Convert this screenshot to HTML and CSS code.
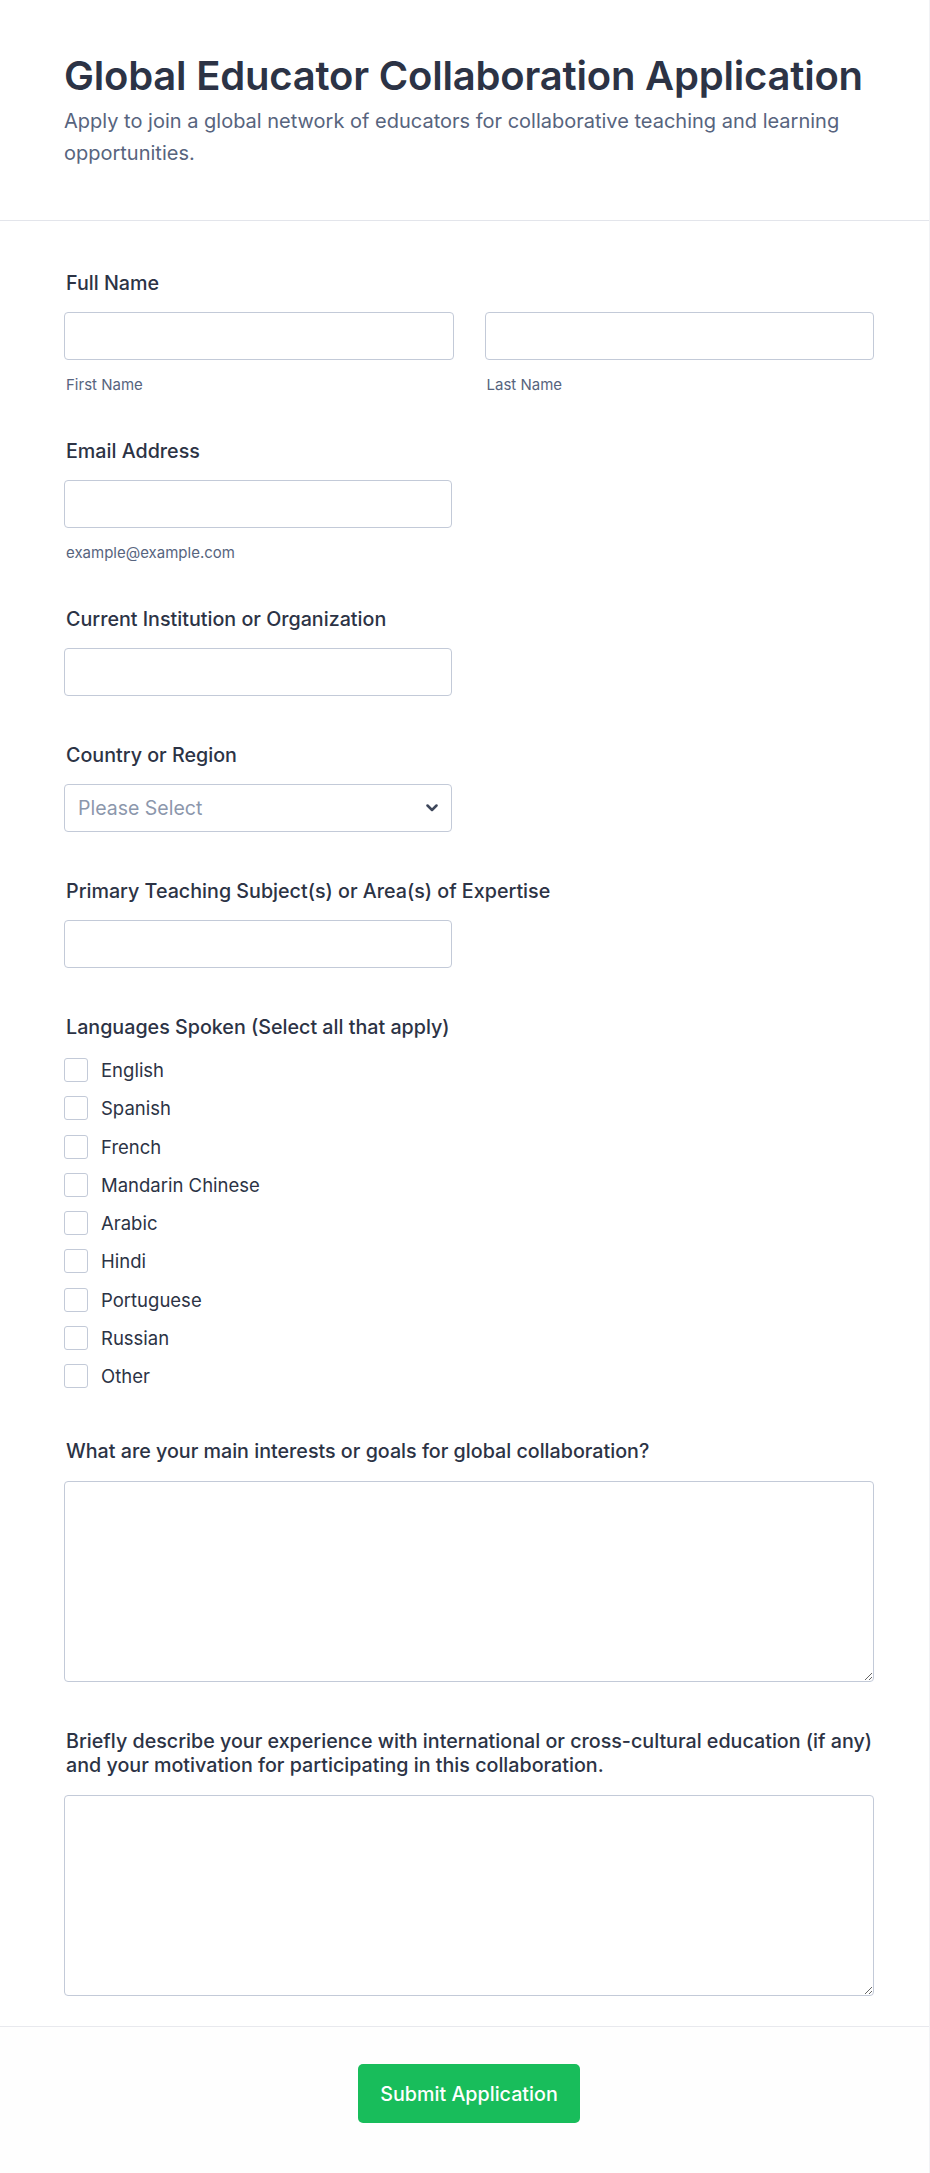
FILE: index.html
```html
<!DOCTYPE html>
<html lang="en">
<head>
<meta charset="utf-8">
<title>Global Educator Collaboration Application</title>
<link rel="stylesheet" href="styles.css">
</head>
<body>
<div class="page">
  <header class="header">
    <h1 class="title">Global Educator Collaboration Application</h1>
    <p class="subtitle">Apply to join a global network of educators for collaborative teaching and learning opportunities.</p>
  </header>

  <form class="form">
    <div class="field field-sub">
      <div class="label">Full Name</div>
      <div class="name-row">
        <div class="name-col">
          <input class="input" type="text">
          <div class="sublabel">First Name</div>
        </div>
        <div class="name-col">
          <input class="input" type="text">
          <div class="sublabel">Last Name</div>
        </div>
      </div>
    </div>

    <div class="field field-sub">
      <div class="label">Email Address</div>
      <input class="input input-half" type="email">
      <div class="sublabel">example@example.com</div>
    </div>

    <div class="field">
      <div class="label">Current Institution or Organization</div>
      <input class="input input-half" type="text">
    </div>

    <div class="field">
      <div class="label">Country or Region</div>
      <div class="select-wrap">
        <select class="select">
          <option>Please Select</option>
        </select>
        <svg class="chevron" width="12" height="8" viewBox="0 0 12 8"><path d="M1.5 1.5 L6 6 L10.5 1.5" fill="none" stroke="#3e475b" stroke-width="2.5" stroke-linecap="round" stroke-linejoin="round"/></svg>
      </div>
    </div>

    <div class="field">
      <div class="label">Primary Teaching Subject(s) or Area(s) of Expertise</div>
      <input class="input input-half" type="text">
    </div>

    <div class="field field-check">
      <div class="label label-check">Languages Spoken (Select all that apply)</div>
      <div class="checks">
        <label class="check"><span class="box"></span><span>English</span></label>
        <label class="check"><span class="box"></span><span>Spanish</span></label>
        <label class="check"><span class="box"></span><span>French</span></label>
        <label class="check"><span class="box"></span><span>Mandarin Chinese</span></label>
        <label class="check"><span class="box"></span><span>Arabic</span></label>
        <label class="check"><span class="box"></span><span>Hindi</span></label>
        <label class="check"><span class="box"></span><span>Portuguese</span></label>
        <label class="check"><span class="box"></span><span>Russian</span></label>
        <label class="check"><span class="box"></span><span>Other</span></label>
      </div>
    </div>

    <div class="field">
      <div class="label label-ta">What are your main interests or goals for global collaboration?</div>
      <textarea class="textarea"></textarea>
    </div>

    <div class="field field-last">
      <div class="label label-ta">Briefly describe your experience with international or cross-cultural education (if any) and your motivation for participating in this collaboration.</div>
      <textarea class="textarea"></textarea>
    </div>
  </form>

  <footer class="footer">
    <button class="submit" type="button">Submit Application</button>
  </footer>
</div>
</body>
</html>
```

FILE: styles.css
```css
* { box-sizing: border-box; }

html, body {
  margin: 0;
  padding: 0;
  background: #ffffff;
}

body {
  font-family: Inter, "Noto Sans", "Liberation Sans", sans-serif;
  color: #2c3345;
}

.page {
  width: 930px;
  min-height: 2173px;
  border-right: 1px solid #f1f2f5;
  display: flex;
  flex-direction: column;
}

.header {
  padding: 52px 55px 51px 64px;
  border-bottom: 1px solid #e3e5eb;
}

.title {
  margin: 0;
  font-size: 40px;
  line-height: 48px;
  font-weight: 600;
  color: #2c3345;
  letter-spacing: -0.2px;
}

.subtitle {
  margin: 5px 0 0;
  font-size: 20px;
  line-height: 32px;
  font-weight: 400;
  color: #57647e;
}

.form {
  padding: 50px 55px 30px 64px;
  border-bottom: 1px solid #e8e9ee;
}

.field {
  margin-bottom: 47px;
}

.field-sub {
  margin-bottom: 44px;
}

.field-check {
  margin-bottom: 51px;
}

.field-last {
  margin-bottom: 0;
}

.label {
  font-size: 19.7px;
  line-height: 24px;
  font-weight: 500;
  color: #2c3345;
  padding-left: 2px;
  margin-bottom: 17px;
}

.label-check {
  margin-bottom: 19px;
}

.label-ta {
  margin-bottom: 18px;
  margin-right: -10px;
}

.name-row {
  display: flex;
  gap: 31px;
}

.name-col {
  flex: 1 1 0;
  min-width: 0;
}

.input {
  display: block;
  width: 100%;
  height: 48px;
  border: 1px solid #c3cad8;
  border-radius: 4px;
  background: #fff;
  font-family: inherit;
  font-size: 18px;
  padding: 0 14px;
  outline: none;
}

.input-half {
  width: 388px;
}

.sublabel {
  margin-top: 15px;
  padding-left: 2px;
  font-size: 15px;
  line-height: 20px;
  color: #57647e;
}

.select-wrap {
  position: relative;
  width: 388px;
}

.select {
  display: block;
  width: 100%;
  height: 48px;
  border: 1px solid #c3cad8;
  border-radius: 4px;
  background: #fff;
  -webkit-appearance: none;
  appearance: none;
  font-family: inherit;
  font-size: 19.5px;
  color: #8c97ac;
  padding: 0 40px 0 13px;
  outline: none;
}

.chevron {
  position: absolute;
  right: 14px;
  top: 20px;
  pointer-events: none;
}

.checks {
  display: flex;
  flex-direction: column;
  gap: 14.3px;
}

.check {
  display: flex;
  align-items: center;
  height: 24px;
  font-size: 18.5px;
  line-height: 24px;
  color: #2c3345;
}

.box {
  width: 24px;
  height: 24px;
  border: 1px solid #c3cad8;
  border-radius: 3px;
  background: #fff;
  margin-right: 13px;
  flex: none;
}

.textarea {
  display: block;
  width: 100%;
  height: 201px;
  border: 1px solid #c3cad8;
  border-radius: 4px;
  background: #fff;
  font-family: inherit;
  font-size: 18px;
  padding: 10px 14px;
  resize: vertical;
  outline: none;
}

.footer {
  flex: 1;
  background: #fefefe;
  padding: 37px 55px 50px 64px;
  display: flex;
  justify-content: center;
  align-items: flex-start;
}

.submit {
  height: 59px;
  padding: 0 22px;
  min-width: 222px;
  border: none;
  border-radius: 5px;
  background: #18bd5b;
  color: #ffffff;
  font-family: inherit;
  font-size: 19.7px;
  font-weight: 500;
  cursor: pointer;
}
```
